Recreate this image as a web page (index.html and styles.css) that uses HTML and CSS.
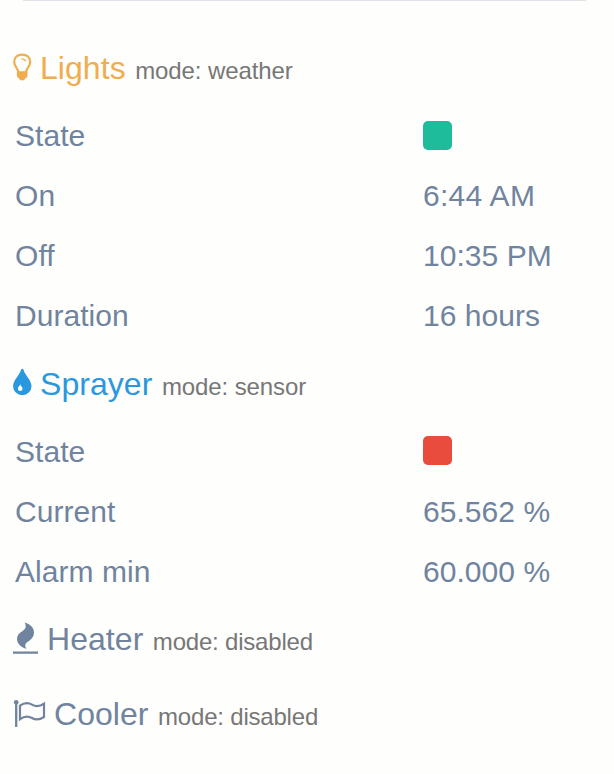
FILE: index.html
```html
<!DOCTYPE html>
<html lang="en">
<head>
<meta charset="utf-8">
<title>Status</title>
<link rel="stylesheet" href="styles.css">
</head>
<body>
<main class="panel">
  <div class="divider"></div>
  <section class="group">
    <h2 class="title lights"><svg class="icon bulb" viewBox="0 0 20 28" fill="none" stroke="currentColor" stroke-width="2.200"><path d="M6.300 19C6 15.500 2.200 13.500 2.200 8.800C2.200 4 6 1.600 10.200 1.600S18.200 4 18.200 8.800C18.200 13.500 14.400 15.500 14 19"/><path d="M9.300 5.800Q12.500 5.800 13.800 8.300" stroke-width="1.300"/><path d="M4.900 18.200h10.600v4.300q0 2-2 2.800-1 2.200-3.300 2.200t-3.300-2.200q-2-.8-2-2.800z" fill="currentColor" stroke="none"/></svg><span class="name">Lights</span><small>mode: weather</small></h2>
    <dl class="rows">
      <div class="row"><dt>State</dt><dd><span class="state on"></span></dd></div>
      <div class="row"><dt>On</dt><dd class="time">6:44 AM</dd></div>
      <div class="row"><dt>Off</dt><dd>10:35 PM</dd></div>
      <div class="row"><dt>Duration</dt><dd>16 hours</dd></div>
    </dl>
  </section>
  <section class="group second">
    <h2 class="title sprayer"><svg class="icon drop" viewBox="0 0 20 28"><path fill="currentColor" fill-rule="evenodd" d="M10.300 .8Q11.300 .8 11.700 2.200C13.200 7.500 19.500 12 19.500 18.200A9.200 9 0 0 1 1.100 18.200C1.100 12 7.400 7.500 8.900 2.200Q9.300 .8 10.300 .8zM8.200 16.200C7.700 18 5.900 19 5.900 20.700a2.300 2.300 0 0 0 4.600 0C10.500 19 8.700 18 8.200 16.200z"/></svg><span class="name">Sprayer</span><small>mode: sensor</small></h2>
    <dl class="rows">
      <div class="row"><dt>State</dt><dd><span class="state off"></span></dd></div>
      <div class="row"><dt>Current</dt><dd>65.562 %</dd></div>
      <div class="row"><dt>Alarm min</dt><dd>60.000 %</dd></div>
    </dl>
  </section>
  <section class="group">
    <h2 class="title heater"><svg class="icon fire" viewBox="0 0 26 32"><path fill="currentColor" d="M12.700 .5C18 2 22 5.500 22 10.500C22 16.500 17 18.500 14.300 21Q12 23.200 14.500 27C9.500 25.500 5 22 5 17C5 10 13 9.500 13.700 5Q14 3 12.700 .5zM1 29.500h25v2.300H1z"/></svg><span class="name">Heater</span><small class="wide">mode: disabled</small></h2>
  </section>
  <section class="group">
    <h2 class="title cooler"><svg class="icon flag" viewBox="0 0 32 28" fill="none" stroke="currentColor" stroke-width="2.200"><path stroke-width="2.300" d="M4.200 2v26"/><path d="M8 6.700C13 3 17 3.800 20 5.600S27 8 32 4.700V18C27 21.300 23 20.700 20 19S13 16.500 8 20.200z"/><circle cx="4.200" cy="3.200" r="2.300" fill="currentColor" stroke="none"/></svg><span class="name">Cooler</span><small class="wide">mode: disabled</small></h2>
  </section>
</main>
</body>
</html>
```
FILE: styles.css
```css
* { box-sizing: border-box; }
body { margin: 0; background: #fefefc; color: #70849f; font-family: "Liberation Sans", Arial, sans-serif; font-size: 30px; }
.panel { height: 774px; overflow: hidden; }
.divider { height: 1px; margin: 0 28px 0 23px; background: #dde3e8; }
.title { display: flex; align-items: baseline; margin: 0; padding-left: 12px; height: 75px; line-height: 75px; font-size: 32px; font-weight: 400; white-space: nowrap; }
.title small { margin-left: 9.5px; color: #777; font-size: 24px; letter-spacing: -.1px; }
.title .wide { letter-spacing: -.2px; }
.name { letter-spacing: .05px; }
.lights { color: #f0ad4e; }
.sprayer { color: #2a98df; }
.group:first-of-type { padding-top: 30px; }
.second { padding-top: 1px; }
.icon { flex: none; overflow: visible; transform: translateY(2px); }
.bulb, .drop { width: 20px; height: 28px; margin-right: 8px; }
.drop { transform: translateY(1px); }
.fire { width: 26px; height: 32px; margin-right: 9px; transform: translateY(4px); }
.flag { width: 32px; height: 28px; margin-right: 10px; }
.rows { margin: 0; }
.row { display: grid; grid-template-columns: 408px 1fr; height: 60px; line-height: 60px; padding-left: 15px; }
dt, dd { margin: 0; letter-spacing: .05px; }
dd { display: flex; align-items: center; }
.time { letter-spacing: .3px; }
.state { width: 29px; height: 29px; margin-bottom: 2px; border-radius: 5px; }
.on { background: #1fbc9c; }
.off { margin-bottom: 4px; background: #e94b3c; }
```
